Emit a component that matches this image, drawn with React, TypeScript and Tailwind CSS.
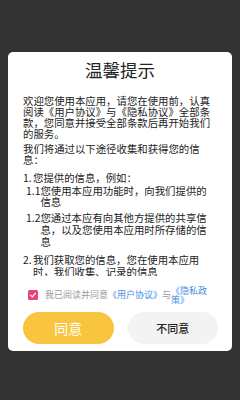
import React from "react";

const cjk = { fontFamily: '"Noto Sans CJK SC", "Noto Sans", sans-serif' };

const Item = ({ label, labelClass, children }: { label: string; labelClass: string; children: React.ReactNode }) => (
  <div className="flex leading-[11.7px]">
    <span className={`shrink-0 ${labelClass}`}>{label}</span>
    <span className="min-w-0">{children}</span>
  </div>
);

export default function App() {
  return (
    <div className="w-[240px] h-[400px] bg-[#333333] px-2 pt-[52px]" style={cjk}>
      <div className="w-[224px] bg-white rounded-[5px] flex flex-col pb-[7px]">
        <h2 className="pt-2 text-center text-[17.5px] leading-[20px] text-[#222]">温馨提示</h2>

        <div className="mt-[15px] h-[181px] overflow-hidden pl-[15px] pr-[19px] text-[10.4px] text-[#222]">
          <p className="leading-[11px]">
            欢迎您使用本应用，请您在使用前，认真阅读《用户协议》与《隐私协议》全部条款，您同意并接受全部条款后再开始我们的服务。
          </p>
          <p className="mt-1 leading-[11px]">我们将通过以下途径收集和获得您的信息：</p>
          <div className="mt-[7px]">
            <Item label="1." labelClass="w-[10px]">您提供的信息，例如：</Item>
          </div>
          <div className="mt-px pl-[3px]">
            <Item label="1.1" labelClass="">您使用本应用功能时，向我们提供的信息</Item>
          </div>
          <div className="mt-1 pl-[3px]">
            <Item label="1.2" labelClass="">您通过本应有向其他方提供的共享信息，以及您使用本应用时所存储的信息</Item>
          </div>
          <div className="mt-[7px]">
            <Item label="2." labelClass="w-[10px]">我们获取您的信息，您在使用本应用时，我们收集、记录的信息</Item>
          </div>
        </div>

        <div className="mt-[9.5px] flex items-center pl-5 pr-[18px] text-[9px] leading-[10px]">
          <span className="shrink-0 w-[10px] h-[10px] rounded-[1.5px] bg-[#e8457c] flex items-center justify-center">
            <svg width="8" height="8" viewBox="0 0 10 10" fill="none">
              <path d="M2 5.2 L4.2 7.3 L8.2 2.8" stroke="white" strokeWidth="1.4" strokeLinecap="round" strokeLinejoin="round" />
            </svg>
          </span>
          <span className="shrink-0 ml-[7px] text-[#9a9a9a]">我已阅读并同意</span>
          <span className="shrink-0 text-[#3f8fe4]">《用户协议》</span>
          <span className="shrink-0 text-[#9a9a9a]">与</span>
          <span className="min-w-0 text-[#3f8fe4] leading-[9.5px]">《隐私政策》</span>
        </div>

        <div className="mt-[7.5px] flex gap-[14px] pl-[15px] pr-[14px]">
          <button className="flex-1 h-8 rounded-full bg-[#f9c43e] text-white text-[14px] leading-none">同意</button>
          <button className="flex-1 h-8 rounded-full bg-[#f3f3f3] text-[#222] text-[11px] font-medium leading-none">不同意</button>
        </div>
      </div>
    </div>
  );
}
